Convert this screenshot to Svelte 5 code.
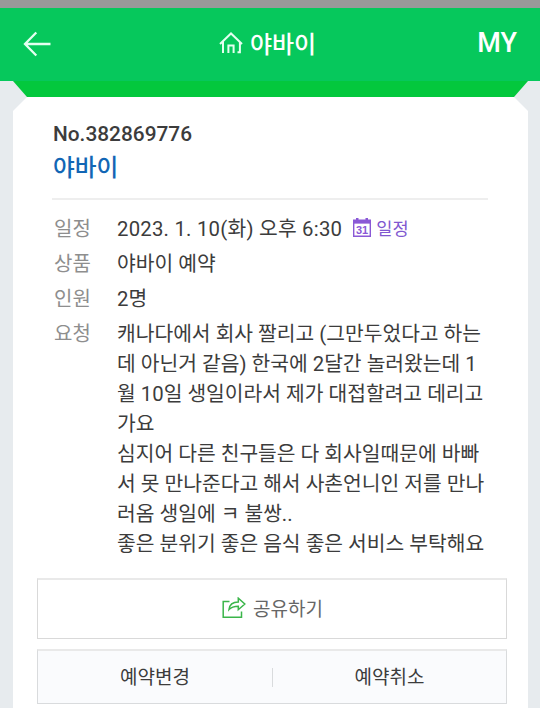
<script>
  const booking = {
    number: '382869776',
    place: '야바이',
    date: '2023. 1. 10(화) 오후 6:30',
    product: '야바이 예약',
    people: '2명',
  }

  const request = [
    '캐나다에서 회사 짤리고 (그만두었다고 하는',
    '데 아닌거 같음) 한국에 2달간 놀러왔는데 1',
    '월 10일 생일이라서 제가 대접할려고 데리고',
    '가요',
    '심지어 다른 친구들은 다 회사일때문에 바빠',
    '서 못 만나준다고 해서 사촌언니인 저를 만나',
    '러옴 생일에 ㅋ 불쌍..',
    '좋은 분위기 좋은 음식 좋은 서비스 부탁해요',
  ]
</script>

<div class="screen">
  <div class="status-bar"></div>

  <header class="header">
    <button class="back" aria-label="뒤로">
      <svg width="28" height="26" viewBox="0 0 28 26">
        <path d="M13.3 1.5 2 13l11.3 11.5M2 13h25.5" />
      </svg>
    </button>
    <h1 class="title">
      <svg width="24" height="22" viewBox="0 0 24 22">
        <path d="M1 12 12 1.5 23 12M4 9.5V21M18.5 20.2H20.9V9.5M9.4 21v-7.4h5.2V21" />
      </svg>
      <span>{booking.place}</span>
    </h1>
    <button class="my">MY</button>
  </header>

  <main class="body">
    <div class="fold"></div>
    <section class="card">
      <div class="summary">
        <p class="number">No.{booking.number}</p>
        <h2 class="place">{booking.place}</h2>
      </div>

      <dl class="details">
        <dt>일정</dt>
        <dd>
          <span class="date">{booking.date}</span>
          <a class="calendar" href="#calendar">
            <svg width="18" height="19" viewBox="0 0 18 19">
              <path class="frame" d="M.7 4.5h16.6v13.8H.7z" />
              <path class="top" d="M0 1.5h3V0h2.5v1.5h7V0H15v1.5h3v4H0z" />
              <text x="9" y="15.6" text-anchor="middle">31</text>
            </svg>
            <span>일정</span>
          </a>
        </dd>
        <dt>상품</dt>
        <dd>{booking.product}</dd>
        <dt>인원</dt>
        <dd>{booking.people}</dd>
        <dt>요청</dt>
        <dd class="request">
          {#each request as line}
            <p>{line}</p>
          {/each}
        </dd>
      </dl>

      <button class="share">
        <svg width="24" height="22" viewBox="0 0 24 22">
          <path d="M7.5 4.5H1.2V20.3h18.3V14.5" />
          <path d="M7 12.5C7.5 7.8 10.5 5 16.3 5V1.2L22.8 7l-6.5 5.7V9.2C11.8 9.2 9.3 10 7 12.5z" />
        </svg>
        <span>공유하기</span>
      </button>

      <div class="actions">
        <button>예약변경</button>
        <button>예약취소</button>
      </div>
    </section>
  </main>
</div>

<style>
  :global(body) {
    margin: 0;
    overflow: hidden;
  }

  .screen {
    height: 708px;
    display: flex;
    flex-direction: column;
    overflow: hidden;
    background: #e7ebee;
    color: #3c3c3c;
    font-family: Roboto, "Noto Sans CJK KR", sans-serif;
    font-size: 20.35px;
    white-space: nowrap;
  }

  h1, h2, p, dl, dd { margin: 0; }

  button {
    padding: 0;
    border: 0;
    background: none;
    color: inherit;
    font: inherit;
  }

  svg {
    display: block;
    fill: none;
    flex-shrink: 0;
  }

  .status-bar {
    height: 8px;
    background: #999;
    flex-shrink: 0;
  }

  /* Header */
  .header {
    height: 73px;
    box-sizing: border-box;
    padding: 0 23px;
    display: grid;
    grid-template-columns: 60px 1fr 60px;
    align-items: center;
    flex-shrink: 0;
    background: #06c85c;
    color: #fff;
  }

  .back svg {
    margin-top: -2px;
    stroke: #e4fff0;
    stroke-width: 2.3;
  }

  .title {
    display: flex;
    align-items: center;
    justify-content: center;
    gap: 7px;
    padding-right: 5px;
    font-size: 24px;
    font-weight: 500;
    line-height: 36px;
  }

  .title svg {
    margin-top: -4px;
    stroke: #e4fff0;
    stroke-width: 2;
  }

  .my {
    justify-self: end;
    font-size: 27px;
    font-weight: 500;
    line-height: 32px;
    margin-top: -4px;
  }

  /* Card */
  .body {
    flex: 1;
    padding: 0 12px 0 13px;
  }

  .fold {
    height: 16px;
    background: #03c83d;
    clip-path: polygon(0 0, 100% 0, calc(100% - 14px) 100%, 14px 100%);
  }

  .card {
    height: 611px;
    box-sizing: border-box;
    padding: 22px 21px 0 24px;
    background: #fff;
    clip-path: polygon(14px 0, calc(100% - 14px) 0, 100% 14px, 100% 100%, 0 100%, 0 14px);
  }

  .summary {
    height: 81px;
    box-sizing: border-box;
    margin: 0 19px 0 15px;
    padding-left: 1px;
    border-bottom: 2px solid #eee;
  }

  .number {
    font-size: 20.85px;
    font-weight: 500;
    line-height: 30px;
  }

  .place {
    margin-top: 1px;
    color: #1266b5;
    font-size: 23.7px;
    font-weight: 500;
    line-height: 36px;
  }

  .details {
    display: grid;
    grid-template-columns: 63px 1fr;
    row-gap: 5px;
    margin: 14px 0 0 17px;
    line-height: 30px;
  }

  dt {
    color: #8e8e8e;
    font-size: 20px;
  }

  dd { display: flex; }

  .date { letter-spacing: 0.22px; }

  .request { display: block; }

  .calendar {
    display: flex;
    align-items: center;
    gap: 5px;
    margin-left: 11px;
    color: #8058d0;
    font-size: 17.6px;
    text-decoration: none;
  }

  .calendar svg { margin-top: -3px; }

  .frame { stroke: #8a58d6; stroke-width: 1.4; }
  .top { fill: #8a58d6; }

  .calendar text {
    fill: #8a58d6;
    font: 700 11px "Liberation Sans", sans-serif;
  }

  /* Buttons */
  .share {
    width: 100%;
    height: 61px;
    margin-top: 19px;
    padding: 0 0 3px 1px;
    display: flex;
    align-items: center;
    justify-content: center;
    gap: 7px;
    border: 1px solid #d9d9d9;
    border-top: 2px solid #e9e9e9;
    color: #666;
    font-size: 19px;
  }

  .share svg {
    stroke: #3bb54a;
    stroke-width: 1.5;
  }

  .actions {
    height: 55px;
    box-sizing: border-box;
    margin-top: 10px;
    display: grid;
    grid-template-columns: 1fr 1fr;
    align-items: center;
    border: 1px solid #d9dbdd;
    border-top: 2px solid #e9e9e9;
    background: #fafbfd;
    font-size: 19px;
  }

  .actions button { line-height: 19px; }

  .actions button + button { border-left: 1px solid #d9dbdd; }
</style>
